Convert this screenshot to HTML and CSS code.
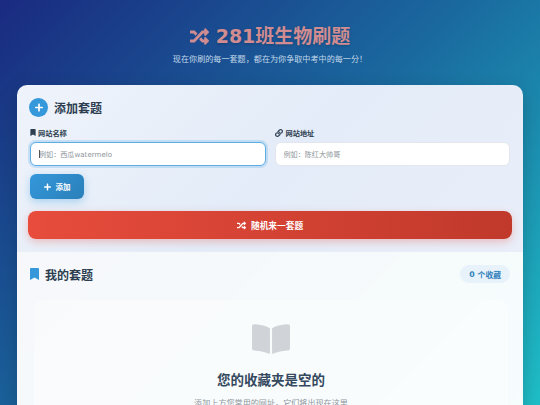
FILE: index.html
```html
<!DOCTYPE html>
<html lang="zh-CN">

<head>
    <meta charset="UTF-8">
    <meta name="viewport" content="width=device-width, initial-scale=1.0">
    <title>281班生物刷题</title>
    <link rel="stylesheet" href="styles.css">
</head>

<body>
    <header class="page-header">
        <h1>
            <svg class="shuffle-icon" viewBox="0 0 512 512"><path d="M504.971 359.029c9.373 9.373 9.373 24.569 0 33.941l-80 79.984c-15.01 15.01-40.971 4.49-40.971-16.971V416h-58.785a12.004 12.004 0 0 1-8.773-3.812l-70.556-75.596 53.333-57.143L352 336h32v-39.981c0-21.438 25.943-31.998 40.971-16.971l80 79.981zM12 176h84l52.781 56.551 53.333-57.143-70.556-75.596A11.999 11.999 0 0 0 122.785 96H12c-6.627 0-12 5.373-12 12v56c0 6.627 5.373 12 12 12zm372 0v39.984c0 21.46 25.961 31.98 40.971 16.971l80-79.984c9.373-9.373 9.373-24.569 0-33.941l-80-79.981C409.943 24.021 384 34.582 384 56.019V96h-58.785a12.004 12.004 0 0 0-8.773 3.812L96 336H12c-6.627 0-12 5.373-12 12v56c0 6.627 5.373 12 12 12h110.785c3.326 0 6.503-1.381 8.773-3.812L352 176h32z" /></svg>
            281班生物刷题
        </h1>
        <p>现在你刷的每一套题，都在为你争取中考中的每一分！</p>
    </header>

    <div class="card">
        <section class="add-section">
            <div class="add-title">
                <span class="plus-circle">
                    <svg viewBox="0 0 448 512"><path d="M416 208H272V64c0-17.67-14.33-32-32-32h-32c-17.67 0-32 14.33-32 32v144H32c-17.67 0-32 14.33-32 32v32c0 17.67 14.33 32 32 32h144v144c0 17.67 14.33 32 32 32h32c17.67 0 32-14.33 32-32V304h144c17.67 0 32-14.33 32-32v-32c0-17.67-14.33-32-32-32z" /></svg>
                </span>
                <h2>添加套题</h2>
            </div>
            <div class="form-row">
                <div class="field">
                    <label>
                        <svg class="label-icon" viewBox="0 0 384 512"><path d="M0 512V48C0 21.49 21.49 0 48 0h288c26.51 0 48 21.49 48 48v464L192 400 0 512z" /></svg>
                        网站名称
                    </label>
                    <div class="input-wrap">
                        <input class="focused" type="text" placeholder="例如：西瓜watermelo">
                        <span class="caret"></span>
                    </div>
                </div>
                <div class="field">
                    <label class="link-label">
                        <svg class="label-icon link" viewBox="0 0 512 512"><path d="M326.612 185.391c59.747 59.809 58.927 155.698.36 214.59-.11.12-.24.25-.36.37l-67.2 67.2c-59.27 59.27-155.699 59.262-214.96 0-59.27-59.26-59.27-155.7 0-214.96l37.106-37.106c9.84-9.84 26.786-3.3 27.294 10.606.648 17.722 3.826 35.527 9.69 52.721 1.986 5.822.567 12.262-3.783 16.612l-13.087 13.087c-28.026 28.026-28.905 73.66-1.155 101.96 28.024 28.579 74.086 28.749 102.325.51l67.2-67.19c28.191-28.191 28.073-73.757 0-101.83-3.701-3.694-7.429-6.564-10.341-8.569a16.037 16.037 0 0 1-6.947-12.606c-.396-10.567 3.348-21.456 11.698-29.806l21.054-21.055c5.521-5.521 14.182-6.199 20.584-1.731a152.482 152.482 0 0 1 20.522 17.197zM467.547 44.449c-59.261-59.262-155.69-59.27-214.96 0l-67.2 67.2c-.12.12-.25.25-.36.37-58.566 58.892-59.387 154.781.36 214.59a152.454 152.454 0 0 0 20.521 17.196c6.402 4.468 15.064 3.789 20.584-1.731l21.054-21.055c8.35-8.35 12.094-19.239 11.698-29.806a16.037 16.037 0 0 0-6.947-12.606c-2.912-2.005-6.64-4.875-10.341-8.569-28.073-28.073-28.191-73.639 0-101.83l67.2-67.19c28.239-28.239 74.3-28.069 102.325.51 27.75 28.3 26.872 73.934-1.155 101.96l-13.087 13.087c-4.35 4.35-5.769 10.79-3.783 16.612 5.864 17.194 9.042 34.999 9.69 52.721.509 13.906 17.454 20.446 27.294 10.606l37.106-37.106c59.271-59.259 59.271-155.699.001-214.959z" /></svg>
                        网站地址
                    </label>
                    <div class="input-wrap">
                        <input type="text" placeholder="例如：陈红大帅哥">
                    </div>
                </div>
            </div>
            <button class="add-btn">
                <svg viewBox="0 0 448 512"><path d="M416 208H272V64c0-17.67-14.33-32-32-32h-32c-17.67 0-32 14.33-32 32v144H32c-17.67 0-32 14.33-32 32v32c0 17.67 14.33 32 32 32h144v144c0 17.67 14.33 32 32 32h32c17.67 0 32-14.33 32-32V304h144c17.67 0 32-14.33 32-32v-32c0-17.67-14.33-32-32-32z" /></svg>
                添加
            </button>
            <button class="random-btn">
                <svg class="shuffle-small" viewBox="0 0 512 512"><path d="M504.971 359.029c9.373 9.373 9.373 24.569 0 33.941l-80 79.984c-15.01 15.01-40.971 4.49-40.971-16.971V416h-58.785a12.004 12.004 0 0 1-8.773-3.812l-70.556-75.596 53.333-57.143L352 336h32v-39.981c0-21.438 25.943-31.998 40.971-16.971l80 79.981zM12 176h84l52.781 56.551 53.333-57.143-70.556-75.596A11.999 11.999 0 0 0 122.785 96H12c-6.627 0-12 5.373-12 12v56c0 6.627 5.373 12 12 12zm372 0v39.984c0 21.46 25.961 31.98 40.971 16.971l80-79.984c9.373-9.373 9.373-24.569 0-33.941l-80-79.981C409.943 24.021 384 34.582 384 56.019V96h-58.785a12.004 12.004 0 0 0-8.773 3.812L96 336H12c-6.627 0-12 5.373-12 12v56c0 6.627 5.373 12 12 12h110.785c3.326 0 6.503-1.381 8.773-3.812L352 176h32z" /></svg>
                随机来一套题
            </button>
        </section>

        <section class="list-section">
            <div class="list-head">
                <h2>
                    <svg class="bookmark" viewBox="0 0 384 512"><path d="M0 512V48C0 21.49 21.49 0 48 0h288c26.51 0 48 21.49 48 48v464L192 400 0 512z" /></svg>
                    我的套题
                </h2>
                <span class="count"><b>0</b> 个收藏</span>
            </div>
            <div class="empty">
                <svg class="book" viewBox="0 0 576 512"><path d="M542.22 32.05c-54.8 3.11-163.72 14.43-230.96 55.59-4.64 2.84-7.27 7.89-7.27 13.17v363.87c0 11.55 12.63 18.85 23.28 13.49 69.18-34.82 169.23-44.32 218.7-46.92 16.89-.89 30.02-14.43 30.02-30.66V62.75c.01-17.71-15.35-31.74-33.77-30.7zM264.73 87.64C197.5 46.48 88.58 35.17 33.78 32.05 15.36 31.01 0 45.04 0 62.75V400.6c0 16.24 13.13 29.78 30.02 30.66 49.49 2.6 149.59 12.11 218.77 46.95 10.62 5.35 23.21-1.94 23.21-13.46V100.63c0-5.29-2.62-10.14-7.27-12.99z" /></svg>
                <h3>您的收藏夹是空的</h3>
                <p>添加上方您常用的网址，它们将出现在这里</p>
            </div>
        </section>
    </div>
</body>

</html>
```
FILE: styles.css
```css
* {
    box-sizing: border-box;
}

html,
body {
    height: 100%;
}

body {
    margin: 0;
    overflow: hidden;
    padding: 0 17px;
    font-family: "DejaVu Sans", "Noto Sans CJK SC", sans-serif;
    color: #2c3e50;
    background: linear-gradient(135deg, #1a2a80 0%, #1a6a9f 50%, #1fc0c8 100%);
}

.page-header {
    height: 85px;
    padding-top: 23px;
    text-align: center;
}

.page-header h1 {
    margin: 0;
    font-size: 19px;
    line-height: 26px;
    font-weight: 700;
    color: #d08c90;
    display: flex;
    justify-content: center;
    align-items: center;
    gap: 7px;
    text-shadow: 0 1px 3px rgba(0, 0, 0, 0.2);
}

.shuffle-icon {
    width: 19px;
    height: 19px;
    fill: currentColor;
}

.page-header p {
    margin: 4px 0 0;
    font-size: 8.1px;
    line-height: 12px;
    color: #c3d9ea;
}

.card {
    height: 340px;
    border-radius: 10px 10px 0 0;
    overflow: hidden;
    box-shadow: 0 6px 20px rgba(0, 0, 0, 0.2);
}

.add-section {
    height: 167px;
    padding: 12px 11px 0;
    background: linear-gradient(135deg, #eff3fb 0%, #e3ecf8 50%, #e9eef9 100%);
}

.add-title {
    display: flex;
    align-items: center;
    gap: 6px;
    height: 21px;
    margin: 0 0 9px 1px;
}

.plus-circle {
    width: 19px;
    height: 19px;
    border-radius: 50%;
    background: #3498db;
    display: flex;
    align-items: center;
    justify-content: center;
}

.plus-circle svg {
    width: 8px;
    height: 9px;
    fill: #fff;
}

.add-title h2 {
    margin: 0;
    font-size: 12px;
    font-weight: 600;
    color: #2c3e50;
}

.form-row {
    display: flex;
    gap: 9px;
    padding: 0 2px;
}

.field {
    flex: 1;
}

.field label {
    display: flex;
    align-items: center;
    gap: 2px;
    height: 11px;
    margin-bottom: 4px;
    font-size: 7.2px;
    font-weight: 600;
    color: #2c3e50;
}

.field .link-label {
    gap: 3px;
}

.label-icon {
    width: 6px;
    height: 7px;
    fill: #2c3e50;
}

.label-icon.link {
    width: 8px;
    height: 8px;
}

.input-wrap {
    position: relative;
}

.field input {
    display: block;
    width: 100%;
    height: 24px;
    padding: 0 8px;
    border: 1px solid #e3e6ec;
    border-radius: 6px;
    background: #fff;
    font-family: inherit;
    font-size: 7.1px;
    outline: none;
}

.field input::placeholder {
    color: #8d9499;
}

.field input.focused {
    border-color: #5dade2;
    box-shadow: 0 0 0 2px rgba(52, 152, 219, 0.2);
}

.caret {
    position: absolute;
    left: 9px;
    top: 8px;
    width: 1px;
    height: 8px;
    background: #555;
}

.add-btn {
    display: flex;
    align-items: center;
    justify-content: center;
    gap: 5px;
    width: 54px;
    height: 25px;
    margin: 8px 0 0 2px;
    border: none;
    border-radius: 6px;
    background: linear-gradient(135deg, #3498db, #2a7fb8);
    box-shadow: 0 3px 8px rgba(52, 152, 219, 0.35);
    font-family: inherit;
    font-size: 7.5px;
    font-weight: 600;
    color: #fff;
}

.add-btn svg {
    width: 7px;
    height: 8px;
    fill: #fff;
}

.random-btn {
    display: flex;
    align-items: center;
    justify-content: center;
    gap: 5px;
    width: 484px;
    height: 28px;
    margin: 12px 0 0;
    border: none;
    border-radius: 8px;
    background: linear-gradient(90deg, #e74c3c, #c0392b);
    box-shadow: 0 3px 9px rgba(231, 76, 60, 0.3);
    font-family: inherit;
    font-size: 8.7px;
    font-weight: 600;
    color: #fff;
}

.shuffle-small {
    width: 9px;
    height: 9px;
    fill: #fff;
}

.list-section {
    height: 173px;
    padding: 13px 13px 0;
    background: rgba(255, 255, 255, 0.96);
}

.list-head {
    display: flex;
    justify-content: space-between;
    align-items: center;
    height: 18px;
}

.list-head h2 {
    display: flex;
    align-items: center;
    gap: 6px;
    margin: 0;
    font-size: 12px;
    font-weight: 600;
    color: #2c3e50;
}

.bookmark {
    width: 9px;
    height: 12px;
    fill: #3498db;
}

.count {
    display: flex;
    align-items: center;
    gap: 3px;
    height: 18px;
    padding: 0 9px;
    border-radius: 9px;
    background: #e8f2fb;
    font-size: 7.8px;
    font-weight: 600;
    color: #2f80ba;
}

.empty {
    height: 150px;
    margin: 17px 2px 0 4px;
    padding-top: 22px;
    border-radius: 10px;
    background: rgba(255, 255, 255, 0.35);
    text-align: center;
}

.book {
    display: block;
    width: 38px;
    height: 34px;
    margin: 0 auto;
    fill: #d0d4d8;
}

.empty h3 {
    margin: 15px 0 0;
    font-size: 13.5px;
    line-height: 19px;
    font-weight: 700;
    color: #34495e;
}

.empty p {
    margin: 7px 0 0;
    font-size: 8.1px;
    line-height: 12px;
    color: #8d969c;
}
```
